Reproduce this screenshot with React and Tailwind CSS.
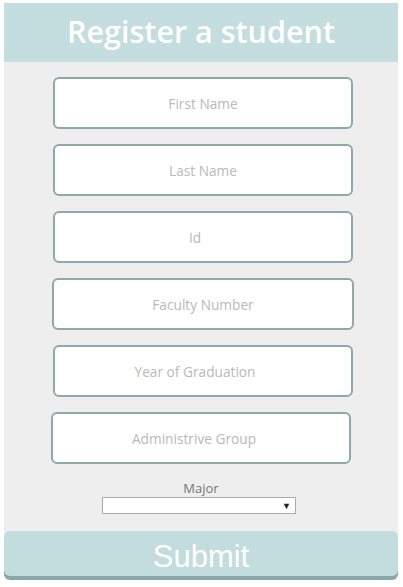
import React from 'react';

const FIELDS = [
  { label: 'First Name', shift: 'ml-[53px]' },
  { label: 'Last Name', shift: 'ml-[53px]' },
  { label: 'Id', shift: 'ml-[53px] pr-[16px]' },
  { label: 'Faculty Number', shift: 'ml-[52px] w-[302px]' },
  { label: 'Year of Graduation', shift: 'ml-[53px] pr-[16px]' },
  { label: 'Administrive Group', shift: 'ml-[51px] pr-[14px]' },
];

export default function App() {
  return (
    <div className="min-h-[587px] bg-white pt-[3px] pl-[4px] pr-[5px]" style={{ fontFamily: '"Open Sans", sans-serif' }}>
      <div className="bg-[#eeeeee]">
        <div className="h-[59px] bg-[#c4dddf] flex items-center justify-center">
          <h1 className="text-white text-[30.5px] font-semibold leading-none pb-[2px]">Register a student</h1>
        </div>

        <div className="flex flex-col gap-[15px] pt-[15px]">
          {FIELDS.map((f) => (
            <input
              key={f.label}
              placeholder={f.label}
              className={`w-[300px] h-[52px] ${f.shift} -translate-x-[4px] bg-white border-2 border-[#8ea9ab] rounded-[6px] text-center text-[13.7px] text-[#555] placeholder:text-[#b9b9b9] outline-none`}
            />
          ))}
        </div>

        <div className="flex flex-col items-center pt-[15px]">
          <span className="text-[13px] leading-[18px] text-[#777]">Major</span>
          <div className="w-[194px] h-[17px] bg-white border border-[#aaaaaa] flex items-center justify-end pr-[4px] -translate-x-[2px]">
            <span className="text-[9px] leading-none text-[#222]">▼</span>
          </div>
        </div>

        <div className="pt-[17px]">
          <button className="w-full h-[45px] bg-[#c3dcdd] rounded-[6px] shadow-[0_4px_0_#8ba6a7] text-white text-[31px] leading-none pt-[5px]" style={{ fontFamily: '"Liberation Sans", Arial, sans-serif' }}>
            Submit
          </button>
        </div>
      </div>
    </div>
  );
}
